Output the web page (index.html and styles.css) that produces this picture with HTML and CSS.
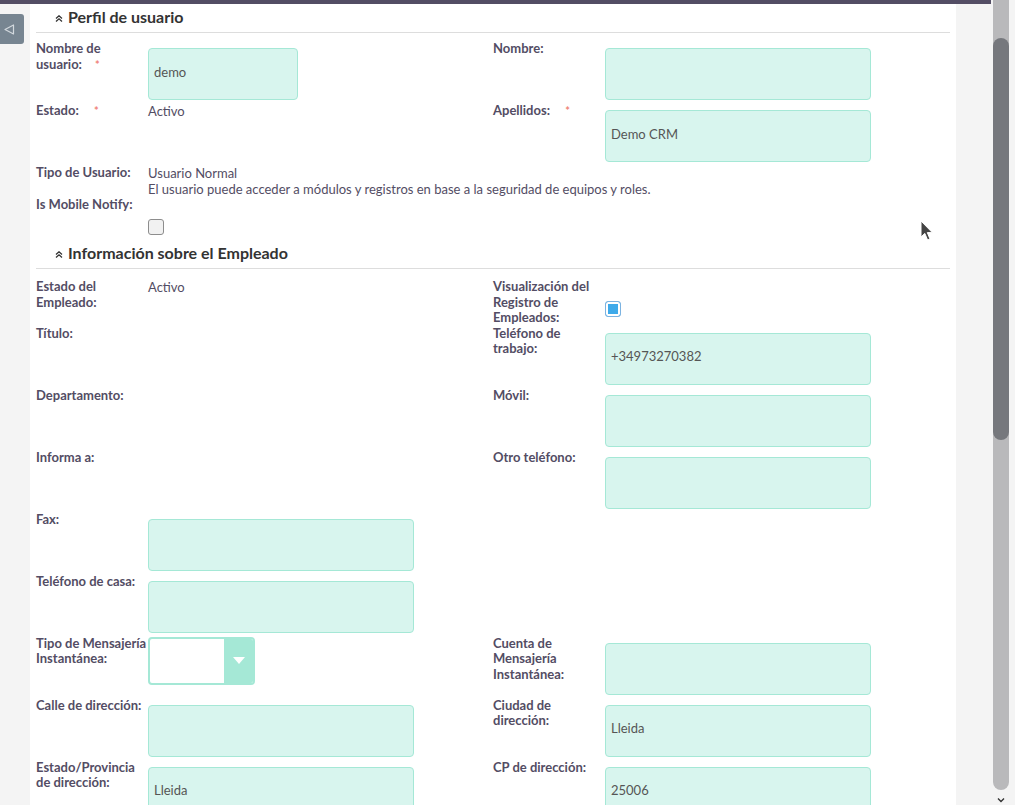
FILE: index.html
```html
<!DOCTYPE html>
<html lang="es">
<head>
    <meta charset="UTF-8">
    <meta name="viewport" content="width=device-width, initial-scale=1.0">
    <title>Perfil de usuario</title>
    <link rel="stylesheet" href="styles.css">
</head>
<body>
    <div class="window">
        <div class="topbar"></div>
        <div class="page">
            <aside class="sidebar">
                <button class="sidebar-toggle">
                    <svg width="11" height="11" viewBox="0 0 11 11"><polygon points="9.5,1 9.5,10 1,5.5" fill="none" stroke="#d3d9de" stroke-width="1.2" stroke-linejoin="round"/></svg>
                </button>
            </aside>

            <main class="panel">
                <section class="panel-section panel-user">
                    <h2 class="section-title">
                        <svg class="collapse-icon" viewBox="0 0 8 7"><polyline points="1,3.5 4,0.8 7,3.5" /><polyline points="1,6.5 4,3.8 7,6.5" /></svg>
                        Perfil de usuario
                    </h2>
                    <div class="section-body">
                        <div class="row">
                            <div class="cell">
                                <div class="label">Nombre de<br>usuario: <span class="req">*</span></div>
                                <div class="field"><input class="input input-short" type="text" value="demo"></div>
                            </div>
                            <div class="cell">
                                <div class="label">Nombre:</div>
                                <div class="field"><input class="input" type="text" value=""></div>
                            </div>
                        </div>
                        <div class="row">
                            <div class="cell">
                                <div class="label">Estado: <span class="req req-wide">*</span></div>
                                <div class="field value">Activo</div>
                            </div>
                            <div class="cell">
                                <div class="label">Apellidos: <span class="req req-wide">*</span></div>
                                <div class="field"><input class="input" type="text" value="Demo CRM"></div>
                            </div>
                        </div>
                        <div class="row">
                            <div class="cell">
                                <div class="label">Tipo de Usuario:</div>
                                <div class="field value">Usuario Normal<br>El usuario puede acceder a módulos y registros en base a la seguridad de equipos y roles.</div>
                            </div>
                            <div class="cell"></div>
                        </div>
                        <div class="row">
                            <div class="cell">
                                <div class="label">Is Mobile Notify:</div>
                                <div class="field"><input class="checkbox" type="checkbox"></div>
                            </div>
                            <div class="cell"></div>
                        </div>
                    </div>
                </section>

                <section class="panel-section panel-employee">
                    <h2 class="section-title">
                        <svg class="collapse-icon" viewBox="0 0 8 7"><polyline points="1,3.5 4,0.8 7,3.5" /><polyline points="1,6.5 4,3.8 7,6.5" /></svg>
                        Información sobre el Empleado
                    </h2>
                    <div class="section-body">
                        <div class="row">
                            <div class="cell">
                                <div class="label">Estado del<br>Empleado:</div>
                                <div class="field value">Activo</div>
                            </div>
                            <div class="cell">
                                <div class="label">Visualización del<br>Registro de<br>Empleados:</div>
                                <div class="field"><input class="checkbox" type="checkbox" checked></div>
                            </div>
                        </div>
                        <div class="row">
                            <div class="cell">
                                <div class="label">Título:</div>
                                <div class="field"></div>
                            </div>
                            <div class="cell">
                                <div class="label">Teléfono de<br>trabajo:</div>
                                <div class="field"><input class="input" type="text" value="+34973270382"></div>
                            </div>
                        </div>
                        <div class="row">
                            <div class="cell">
                                <div class="label">Departamento:</div>
                                <div class="field"></div>
                            </div>
                            <div class="cell">
                                <div class="label">Móvil:</div>
                                <div class="field"><input class="input" type="text" value=""></div>
                            </div>
                        </div>
                        <div class="row">
                            <div class="cell">
                                <div class="label">Informa a:</div>
                                <div class="field"></div>
                            </div>
                            <div class="cell">
                                <div class="label">Otro teléfono:</div>
                                <div class="field"><input class="input" type="text" value=""></div>
                            </div>
                        </div>
                        <div class="row">
                            <div class="cell">
                                <div class="label">Fax:</div>
                                <div class="field"><input class="input" type="text" value=""></div>
                            </div>
                            <div class="cell"></div>
                        </div>
                        <div class="row">
                            <div class="cell">
                                <div class="label">Teléfono de casa:</div>
                                <div class="field"><input class="input" type="text" value=""></div>
                            </div>
                            <div class="cell"></div>
                        </div>
                        <div class="row">
                            <div class="cell">
                                <div class="label">Tipo de Mensajería<br>Instantánea:</div>
                                <div class="field">
                                    <div class="select">
                                        <span class="select-value"></span>
                                        <span class="select-arrow"></span>
                                    </div>
                                </div>
                            </div>
                            <div class="cell">
                                <div class="label">Cuenta de<br>Mensajería<br>Instantánea:</div>
                                <div class="field"><input class="input" type="text" value=""></div>
                            </div>
                        </div>
                        <div class="row">
                            <div class="cell">
                                <div class="label">Calle de dirección:</div>
                                <div class="field"><input class="input" type="text" value=""></div>
                            </div>
                            <div class="cell">
                                <div class="label">Ciudad de<br>dirección:</div>
                                <div class="field"><input class="input" type="text" value="Lleida"></div>
                            </div>
                        </div>
                        <div class="row">
                            <div class="cell">
                                <div class="label">Estado/Provincia<br>de dirección:</div>
                                <div class="field"><input class="input" type="text" value="Lleida"></div>
                            </div>
                            <div class="cell">
                                <div class="label">CP de dirección:</div>
                                <div class="field"><input class="input" type="text" value="25006"></div>
                            </div>
                        </div>
                    </div>
                </section>
            </main>
        </div>
    </div>

    <div class="scrollbar">
        <div class="scroll-track">
            <div class="scroll-thumb"></div>
        </div>
        <div class="scroll-down">
            <svg width="8" height="6" viewBox="0 0 8 6"><polyline points="1,1.5 4,4.5 7,1.5" fill="none" stroke="#333" stroke-width="1.4"/></svg>
        </div>
    </div>

    <svg class="cursor" width="14" height="22" viewBox="0 0 14 22">
        <path d="M1 1 L1 17 L4.8 13.4 L7.6 20 L10 19 L7.3 12.6 L12.3 12.6 Z" fill="#444" stroke="#fff" stroke-width="1" stroke-linejoin="round"/>
    </svg>
</body>
</html>
```

FILE: styles.css
```css
* {
    margin: 0;
    padding: 0;
    box-sizing: border-box;
}

body {
    font-family: 'Lato', 'Open Sans', sans-serif;
    background-color: #f4f4f4;
    color: #534d64;
    height: 805px;
    overflow: hidden;
    display: flex;
}

.window {
    width: 991px;
    flex: none;
}

.topbar {
    height: 4px;
    background-color: #534d64;
}

.page {
    display: flex;
    height: 801px;
}

.sidebar {
    width: 30px;
    flex: none;
    padding-top: 10px;
}

.sidebar-toggle {
    width: 24px;
    height: 30px;
    background-color: #778591;
    border: none;
    border-radius: 0 3px 3px 0;
    display: flex;
    align-items: center;
    padding-left: 4px;
}

.panel {
    width: 926px;
    flex: none;
    background-color: #fff;
    padding: 0 6px;
}

.section-title {
    font-size: 16px;
    font-weight: 700;
    line-height: 20px;
    color: #333;
    padding: 3px 0 5px 19px;
    border-bottom: 1px solid #ddd;
    display: flex;
    align-items: center;
}

.collapse-icon {
    width: 8px;
    height: 7px;
    margin: 2px 5px 0 0;
    fill: none;
    stroke: #333;
    stroke-width: 1.3;
}

.section-body {
    padding-top: 8px;
}

.panel-employee .section-body {
    padding-top: 10px;
}

.row {
    display: grid;
    grid-template-columns: 457px 457px;
}

.cell {
    display: flex;
    align-items: flex-start;
}

.label {
    width: 112px;
    flex: none;
    font-size: 13px;
    font-weight: 700;
    line-height: 15.6px;
    white-space: nowrap;
}

.req {
    color: #f08377;
    font-size: 11px;
    margin-left: 10px;
    vertical-align: top;
}

.req-wide {
    margin-left: 12px;
}

.value {
    font-size: 13px;
    line-height: 16px;
    white-space: nowrap;
}

.input {
    display: block;
    width: 266px;
    height: 52px;
    margin: 7px 0 3px;
    padding: 0 5px 5px;
    background-color: #d8f5ee;
    border: 1px solid #a5e8d6;
    border-radius: 4px;
    font-family: 'Lato', 'Open Sans', sans-serif;
    font-size: 13px;
    color: #555;
    outline: none;
}

.input-short {
    width: 150px;
}

.checkbox {
    appearance: none;
    display: block;
    width: 16px;
    height: 16px;
    margin: 22px 0 5px;
    border: 1px solid #8d8d8d;
    border-radius: 3px;
    background-color: #f1f1f1;
}

.checkbox:checked {
    border-color: #7cb3e1;
    background-color: #3eaaea;
    box-shadow: inset 0 0 0 2px #fff;
}

.select {
    display: flex;
    width: 107px;
    height: 48px;
    margin-top: 1px;
    border: 2px solid #a5e8d6;
    border-radius: 4px;
    background-color: #fff;
    overflow: hidden;
}

.select-value {
    flex: 1;
}

.select-arrow {
    width: 29px;
    background-color: #a5e8d6;
    display: flex;
    align-items: center;
    justify-content: center;
}

.select-arrow::after {
    content: '';
    border-left: 6px solid transparent;
    border-right: 6px solid transparent;
    border-top: 7px solid #fff;
}

.scrollbar {
    width: 24px;
    flex: none;
    padding-left: 2px;
}

.scroll-track {
    width: 16px;
    height: 790px;
    padding-top: 38px;
    background-color: #b9b9bb;
    border-radius: 0 0 8px 8px;
}

.scroll-thumb {
    height: 402px;
    background-color: #76787d;
    border-radius: 8px;
}

.scroll-down {
    width: 16px;
    display: flex;
    justify-content: center;
    padding-top: 7px;
}

.cursor {
    position: absolute;
    left: 920px;
    top: 220px;
}
```
